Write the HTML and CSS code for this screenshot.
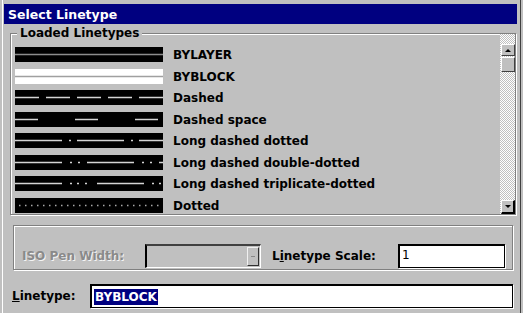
FILE: index.html
```html
<!DOCTYPE html>
<html>
<head>
  <meta charset="UTF-8">
  <title>Select Linetype</title>
  <link rel="stylesheet" href="styles.css">
</head>
<body>
  <div class="window">
    <div class="titlebar">Select Linetype</div>

    <div class="group loaded">
      <span class="group-label">Loaded Linetypes</span>
      <div class="list">
        <div class="rows">
          <div class="row">
            <svg class="swatch bylayer" width="148" height="15"><rect width="148" height="15"/><line x1="0" y1="7.5" x2="148" y2="7.5"/></svg>
            <span class="name">BYLAYER</span>
          </div>
          <div class="row">
            <svg class="swatch byblock" width="148" height="15"><rect width="148" height="15"/><line x1="0" y1="7.5" x2="148" y2="7.5"/></svg>
            <span class="name">BYBLOCK</span>
          </div>
          <div class="row">
            <svg class="swatch" width="148" height="15"><rect width="148" height="15"/><line x1="0" y1="7.5" x2="148" y2="7.5" stroke-dasharray="24 7"/></svg>
            <span class="name">Dashed</span>
          </div>
          <div class="row">
            <svg class="swatch" width="148" height="15"><rect width="148" height="15"/><line x1="0" y1="7.5" x2="148" y2="7.5" stroke-dasharray="23 37"/></svg>
            <span class="name">Dashed space</span>
          </div>
          <div class="row">
            <svg class="swatch" width="148" height="15"><rect width="148" height="15"/><line x1="0" y1="7.5" x2="148" y2="7.5" stroke-dasharray="47 7 2 6"/></svg>
            <span class="name">Long dashed dotted</span>
          </div>
          <div class="row">
            <svg class="swatch" width="148" height="15"><rect width="148" height="15"/><line x1="0" y1="7.5" x2="148" y2="7.5" stroke-dasharray="47 8 2 6 2 7"/></svg>
            <span class="name">Long dashed double-dotted</span>
          </div>
          <div class="row">
            <svg class="swatch" width="148" height="15"><rect width="148" height="15"/><line x1="0" y1="7.5" x2="148" y2="7.5" stroke-dasharray="47 8 2 5 2 6 2 10"/></svg>
            <span class="name">Long dashed triplicate-dotted</span>
          </div>
          <div class="row">
            <svg class="swatch dotted" width="148" height="15"><rect width="148" height="15"/><line x1="4" y1="7.5" x2="148" y2="7.5" stroke-dasharray="1.5 4.5"/></svg>
            <span class="name">Dotted</span>
          </div>
        </div>

        <div class="scrollbar">
          <div class="sb-btn up"><span class="arrow-up"></span></div>
          <div class="sb-thumb"></div>
          <div class="sb-track"></div>
          <div class="sb-btn down"><span class="arrow-down"></span></div>
        </div>
      </div>
    </div>

    <div class="group pen">
      <span class="label disabled pen-label">ISO Pen Width:</span>
      <div class="combo">
        <div class="combo-btn"><span class="combo-dash"></span></div>
      </div>
      <span class="label scale-label">L<u>i</u>netype Scale:</span>
      <div class="field scale-field">1</div>
    </div>

    <div class="linetype-row">
      <span class="label linetype-label"><u>L</u>inetype:</span>
      <div class="field linetype-field"><span class="selected">BYBLOCK</span></div>
    </div>
  </div>
</body>
</html>
```

FILE: styles.css
```css
body {
  margin: 0;
  width: 523px;
  height: 313px;
  overflow: hidden;
  background: #c0c0c0;
  font-family: "DejaVu Sans", "Liberation Sans", sans-serif;
  font-size: 12px;
  font-weight: bold;
  color: #000;
}
.window {
  box-sizing: border-box;
  width: 519px;
  height: 313px;
  margin-left: 2px;
  padding: 4px 3px 0 1px;
  border-left: 1px solid #fff;
  border-right: 1px solid #404040;
}
.titlebar {
  height: 20px;
  line-height: 21px;
  padding-left: 4px;
  background: #000080;
  color: #fff;
  font-size: 12.5px;
}

/* etched group frames */
.group {
  box-sizing: border-box;
  position: relative;
  border: 1px solid #808080;
  box-shadow: inset 1px 1px 0 #fff, 1px 1px 0 #fff;
}
.loaded {
  width: 506px;
  height: 182px;
  margin: 9px 0 0 6px;
}
.group-label {
  position: absolute;
  left: 6px;
  top: -9px;
  padding: 0 3px;
  line-height: 16px;
  background: #c0c0c0;
}
.list {
  display: flex;
  height: 180px;
  padding-left: 1px;
}
.rows {
  flex: 1;
  padding: 13px 0 0 3px;
  overflow: hidden;
}
.row {
  display: flex;
  align-items: center;
  height: 15px;
  margin-bottom: 6.57px;
}
.swatch {
  display: block;
  flex: none;
}
.swatch rect {
  fill: #000;
}
.swatch line {
  stroke: #d4d4d4;
  stroke-width: 1.5;
}
.bylayer line {
  stroke: #8c8c8c;
}
.byblock rect {
  fill: #fff;
}
.byblock line {
  stroke: #a0a0a0;
}
.dotted line {
  stroke: #a8a8a8;
}
.name {
  margin-left: 10px;
  padding-top: 2px;
  line-height: 15px;
  white-space: nowrap;
}

/* scrollbar */
.scrollbar {
  display: flex;
  flex-direction: column;
  width: 15px;
  padding-top: 10px;
  box-sizing: border-box;
  background: repeating-conic-gradient(#fff 0 25%, #c0c0c0 0 50%) 0 0 / 2px 2px;
}
.sb-btn,
.sb-thumb {
  box-sizing: border-box;
  width: 14px;
  margin-left: 1px;
  background: #c0c0c0;
  border: 1px solid;
  border-color: #fff #404040 #404040 #fff;
  display: flex;
  align-items: center;
  justify-content: center;
}
.sb-btn.up {
  height: 12px;
}
.sb-thumb {
  height: 15px;
  margin-top: 1px;
}
.sb-track {
  flex: 1;
}
.sb-btn.down {
  height: 14px;
  border-right-width: 2px;
  border-bottom-width: 2px;
  border-color: #fff #000 #000 #fff;
}
.arrow-up {
  width: 0;
  height: 0;
  border-left: 3px solid transparent;
  border-right: 3px solid transparent;
  border-bottom: 3px solid #000;
}
.arrow-down {
  width: 0;
  height: 0;
  border-left: 3px solid transparent;
  border-right: 3px solid transparent;
  border-top: 3px solid #000;
}

/* pen width / scale frame */
.pen {
  display: flex;
  align-items: center;
  width: 500px;
  height: 45px;
  margin: 10px 0 0 9px;
  padding: 17px 7px 0 8px;
}
.label {
  white-space: nowrap;
  line-height: 15px;
}
.disabled {
  color: #8a8a8a;
  text-shadow: 1px 1px 0 #f4f4f4;
}
.pen-label {
  width: 123px;
  flex: none;
}
.combo {
  box-sizing: border-box;
  width: 116px;
  height: 24px;
  flex: none;
  border: 1px solid #fff;
  border-top: 2px solid #404040;
  border-left: 2px solid #000;
  display: flex;
  justify-content: flex-end;
  align-items: center;
  padding-right: 1px;
}
.combo-btn {
  box-sizing: border-box;
  width: 12px;
  height: 19px;
  border: 1px solid;
  border-color: #f0f0f0 #303030 #303030 #f0f0f0;
  display: flex;
  align-items: center;
  justify-content: center;
}
.combo-dash {
  width: 4px;
  height: 1px;
  background: #888;
}
.scale-label {
  width: 126px;
  flex: none;
  margin-left: 11px;
}
.field {
  box-sizing: border-box;
  height: 24px;
  background: #fff;
  border: 1px solid #000;
  border-top-width: 2px;
  border-left-width: 2px;
  box-shadow: 1px 1px 0 #fff;
  line-height: 19px;
  padding-left: 2px;
  font-weight: normal;
}
.scale-field {
  width: 107px;
  flex: none;
}

/* bottom linetype row */
.linetype-row {
  display: flex;
  align-items: center;
  margin: 14px 0 0 8px;
}
.linetype-label {
  width: 78px;
  flex: none;
}
.linetype-field {
  width: 423px;
  display: flex;
  align-items: center;
}
.selected {
  background: #000080;
  color: #fff;
  font-weight: bold;
  line-height: 16px;
  padding: 0 1px;
}
```
